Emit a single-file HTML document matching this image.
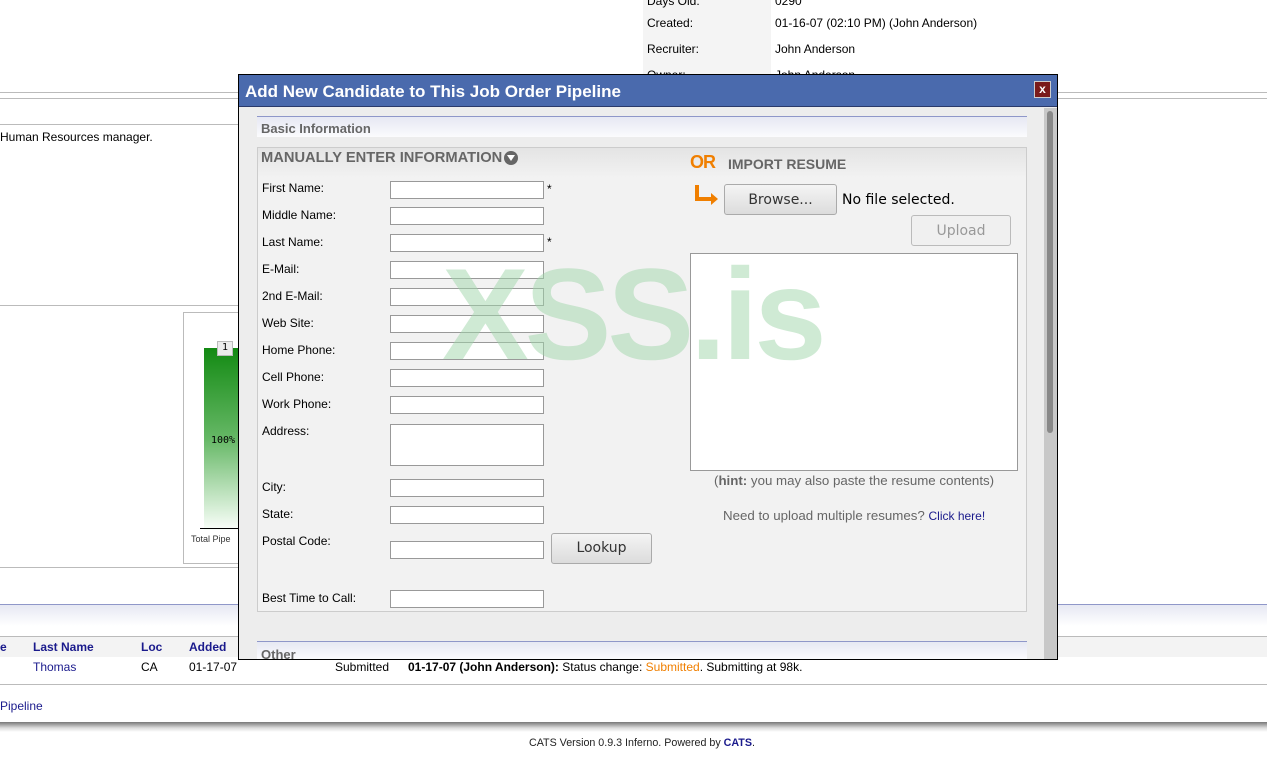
<!DOCTYPE html>
<html><head><meta charset="utf-8"><style>
*{box-sizing:border-box;margin:0;padding:0}
body{width:1267px;height:758px;background:#fff;font-family:"Liberation Sans",Arial,sans-serif;font-size:12px;color:#000;position:relative;overflow:hidden}
.a{position:absolute;white-space:nowrap}
.hl{position:absolute;height:1px;background:#bbb}
.lab{position:absolute;left:262px;font-size:12px;color:#000}
.inp{position:absolute;left:390px;width:154px;height:18px;background:#fff;border:1px solid #999}
.btn{position:absolute;background:linear-gradient(#f4f4f4,#dcdcdc);border:1px solid #aaa;border-radius:3px;font-family:"DejaVu Sans",sans-serif;font-size:14px;color:#333;text-align:center}
.sec{position:absolute;left:257px;width:770px;height:21px;border-top:1px solid #8f97c9;background:linear-gradient(#e6e8f3,#fbfbfd);font-weight:bold;font-size:13px;color:#666;padding:4px 0 0 4px}
</style></head><body>
<div class="a" style="left:643px;top:0;width:128px;height:92px;background:#f4f4f4"></div>
<div class="a" style="left:647px;top:-6px">Days Old:</div><div class="a" style="left:775px;top:-6px">0290</div>
<div class="a" style="left:647px;top:16px">Created:</div><div class="a" style="left:775px;top:16px">01-16-07 (02:10 PM) (John Anderson)</div>
<div class="a" style="left:647px;top:42px">Recruiter:</div><div class="a" style="left:775px;top:42px">John Anderson</div>
<div class="a" style="left:647px;top:68px">Owner:</div><div class="a" style="left:775px;top:68px">John Anderson</div>
<div class="hl" style="left:0;top:92px;width:1267px"></div>
<div class="hl" style="left:0;top:98px;width:1267px"></div>
<div class="hl" style="left:0;top:124px;width:240px"></div>
<div class="a" style="left:0;top:130px">Human Resources manager.</div>
<div class="hl" style="left:0;top:305px;width:240px"></div>
<div class="a" style="left:183px;top:312px;width:60px;height:252px;border:1px solid #bbb"></div>
<div class="a" style="left:204px;top:348px;width:40px;height:182px;background:linear-gradient(#138a13,#66b866 50%,#fafffa)"></div>
<div class="a" style="left:217px;top:341px;width:16px;height:15px;background:#ececec;border:1px solid #bbb;font-size:10px;text-align:center;font-family:'DejaVu Sans Mono',monospace">1</div>
<div class="a" style="left:211px;top:435px;font-size:10px;font-family:'DejaVu Sans Mono',monospace">100%</div>
<div class="a" style="left:200px;top:528px;width:40px;height:1px;background:#000"></div>
<div class="a" style="left:191px;top:534px;font-size:9px;font-family:'Liberation Sans',sans-serif;color:#333">Total Pipe</div>
<div class="hl" style="left:0;top:567px;width:240px"></div>
<div class="a" style="left:0;top:604px;width:1267px;height:22px;border-top:1px solid #8f97c9;background:linear-gradient(#e6e8f3,#fff)"></div>
<div class="hl" style="left:0;top:636px;width:1267px"></div>
<div class="a" style="left:0;top:637px;width:1267px;height:20px;background:#f3f3f3"></div>
<div class="a" style="left:0;top:640px;font-weight:bold;color:#1a1a8c">e</div>
<div class="a" style="left:33px;top:640px;font-weight:bold;color:#1a1a8c">Last Name</div>
<div class="a" style="left:141px;top:640px;font-weight:bold;color:#1a1a8c">Loc</div>
<div class="a" style="left:189px;top:640px;font-weight:bold;color:#1a1a8c">Added</div>
<div class="a" style="left:33px;top:660px;color:#1a1a8c">Thomas</div>
<div class="a" style="left:141px;top:660px">CA</div>
<div class="a" style="left:189px;top:660px">01-17-07</div>
<div class="a" style="left:335px;top:660px">Submitted</div>
<div class="a" style="left:408px;top:660px"><b>01-17-07 (John Anderson):</b> Status change: <span style="color:#f07f00">Submitted</span>. Submitting at 98k.</div>
<div class="hl" style="left:0;top:684px;width:1267px"></div>
<div class="a" style="left:0;top:699px;color:#1a1a8c">Pipeline</div>
<div class="a" style="left:0;top:722px;width:1267px;height:10px;background:linear-gradient(#777,#ddd 60%,#fff)"></div>
<div class="a" style="left:529px;top:737px;font-size:10.7px;color:#222">CATS Version 0.9.3 Inferno. Powered by <b style="color:#1a1a8c">CATS</b>.</div>

<div class="a" style="left:238px;top:74px;width:820px;height:586px;border:1px solid #000;background:#ededed"></div>
<div class="a" style="left:239px;top:75px;width:818px;height:32px;background:#4a6aad;border-bottom:1px solid #2a3a6a"></div>
<div class="a" style="left:245px;top:82px;font-size:17px;font-weight:bold;color:#fff">Add New Candidate to This Job Order Pipeline</div>
<div class="a" style="left:1034px;top:81px;width:17px;height:17px;background:#7a1a1a;border:1px solid #ccc;color:#fff;font-size:12px;font-weight:bold;text-align:center;line-height:15px">x</div>
<div class="a" style="left:1044px;top:108px;width:13px;height:551px;background:#c8c8c8"></div>
<div class="a" style="left:1047px;top:111px;width:6px;height:322px;background:#888;border-radius:3px"></div>

<div class="sec" style="top:116px">Basic Information</div>
<div class="a" style="left:257px;top:147px;width:770px;height:465px;background:#f2f2f2;border:1px solid #ccc"></div>
<div class="a" style="left:258px;top:148px;width:768px;height:30px;background:linear-gradient(#e4e4e4,#f2f2f2)"></div>
<div class="a" style="left:261px;top:150px;font-size:14.7px;font-weight:bold;color:#666">MANUALLY ENTER INFORMATION</div>
<div class="a" style="left:504px;top:151px;width:14px;height:14px;border-radius:7px;background:#666"></div>
<div class="a" style="left:507px;top:155px;width:0;height:0;border-left:4px solid transparent;border-right:4px solid transparent;border-top:6px solid #fff"></div>

<div class="lab" style="top:181px">First Name:</div><div class="inp" style="top:181px"></div><div class="a" style="left:547px;top:182px">*</div>
<div class="lab" style="top:208px">Middle Name:</div><div class="inp" style="top:207px"></div>
<div class="lab" style="top:235px">Last Name:</div><div class="inp" style="top:234px"></div><div class="a" style="left:547px;top:235px">*</div>
<div class="lab" style="top:262px">E-Mail:</div><div class="inp" style="top:261px"></div>
<div class="lab" style="top:289px">2nd E-Mail:</div><div class="inp" style="top:288px"></div>
<div class="lab" style="top:316px">Web Site:</div><div class="inp" style="top:315px"></div>
<div class="lab" style="top:343px">Home Phone:</div><div class="inp" style="top:342px"></div>
<div class="lab" style="top:370px">Cell Phone:</div><div class="inp" style="top:369px"></div>
<div class="lab" style="top:397px">Work Phone:</div><div class="inp" style="top:396px"></div>
<div class="lab" style="top:424px">Address:</div><div class="inp" style="top:424px;height:42px"></div>
<div class="lab" style="top:480px">City:</div><div class="inp" style="top:479px"></div>
<div class="lab" style="top:507px">State:</div><div class="inp" style="top:506px"></div>
<div class="lab" style="top:534px">Postal Code:</div><div class="inp" style="top:541px"></div>
<div class="btn" style="left:551px;top:533px;width:101px;height:31px;line-height:29px">Lookup</div>
<div class="lab" style="top:591px">Best Time to Call:</div><div class="inp" style="top:590px"></div>

<div class="a" style="left:690px;top:152px;font-size:18px;font-weight:900;color:#f07f00;letter-spacing:-1px">OR</div>
<div class="a" style="left:728px;top:156px;font-size:14px;font-weight:bold;color:#666">IMPORT RESUME</div>
<svg class="a" style="left:694px;top:184px" width="26" height="22"><path d="M3 1V15H19" stroke="#f07f00" stroke-width="4" fill="none"/><path d="M17 9L24 15L17 21Z" fill="#f07f00"/></svg>
<div class="btn" style="left:724px;top:184px;width:113px;height:31px;line-height:30px">Browse...</div>
<div class="a" style="left:842px;top:192px;font-family:'DejaVu Sans',sans-serif;font-size:14px">No file selected.</div>
<div class="btn" style="left:911px;top:215px;width:100px;height:31px;line-height:31px;color:#999;background:#f0f0f0;border-color:#bbb">Upload</div>
<div class="a" style="left:690px;top:253px;width:328px;height:218px;background:#fff;border:1px solid #999"></div>
<div class="a" style="left:714px;top:473px;font-size:13.3px;color:#666">(<b>hint:</b> you may also paste the resume contents)</div>
<div class="a" style="left:723px;top:508px;font-size:13.3px;color:#666">Need to upload multiple resumes? <span style="color:#1a1a8c;font-size:12px">Click here!</span></div>

<div class="a" style="left:257px;top:641px;width:770px;height:18px;border-top:1px solid #8f97c9;background:linear-gradient(#e6e8f3,#fbfbfd);overflow:hidden"><div style="padding:5px 0 0 4px;font-weight:bold;font-size:13px;color:#666">Other</div></div>

<div class="a" style="left:442px;top:239px;font-size:130px;font-weight:bold;color:rgba(160,214,170,0.5);letter-spacing:-4px">XSS.is</div>
</body></html>
